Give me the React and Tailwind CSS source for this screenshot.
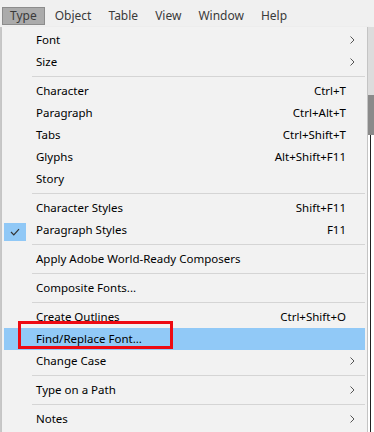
const items = [
  { label: "Font", sub: true },
  { label: "Size", sub: true },
  { sep: true },
  { label: "Character", key: "Ctrl+T" },
  { label: "Paragraph", key: "Ctrl+Alt+T" },
  { label: "Tabs", key: "Ctrl+Shift+T" },
  { label: "Glyphs", key: "Alt+Shift+F11" },
  { label: "Story" },
  { sep: true },
  { label: "Character Styles", key: "Shift+F11" },
  { label: "Paragraph Styles", key: "F11", checked: true },
  { sep: true },
  { label: "Apply Adobe World-Ready Composers" },
  { sep: true },
  { label: "Composite Fonts..." },
  { sep: true },
  { label: "Create Outlines", key: "Ctrl+Shift+O" },
  { label: "Find/Replace Font...", active: true },
  { label: "Change Case", sub: true },
  { sep: true },
  { label: "Type on a Path", sub: true },
  { sep: true },
  { label: "Notes", sub: true },
];

const menuBar = ["Type", "Object", "Table", "View", "Window", "Help"];

function Chevron() {
  return (
    <svg width="5" height="8" viewBox="0 0 5 8" className="absolute right-[10px] top-[7px]">
      <path d="M0.5 0.5 L4 4 L0.5 7.5" fill="none" stroke="#555" strokeWidth="1" />
    </svg>
  );
}

function Check() {
  return (
    <div className="absolute left-0 top-[4px] w-[22px] h-[18px] bg-[#90c8f6] flex items-center justify-center">
      <svg width="10" height="8" viewBox="0 0 10 8">
        <path d="M1 4 L3.8 6.8 L9 1.2" fill="none" stroke="#333" strokeWidth="1.2" />
      </svg>
    </div>
  );
}

function MenuItem({ item }) {
  if (item.sep) {
    return (
      <div className="h-[7px] flex items-center pl-[28px]">
        <div className="h-px w-full bg-[#d5d5d5]" />
      </div>
    );
  }
  return (
    <div
      className={`relative h-[22px] flex items-center pl-[32px] pr-[19px] ${
        item.active ? "bg-[#91c9f7]" : ""
      }`}
    >
      {item.checked && <Check />}
      {item.active && (
        <div className="absolute left-[14px] top-[-7px] w-[155px] h-[28px] border-[3px] border-[#ee0a12]" />
      )}
      <span className="flex-1">{item.label}</span>
      {item.key && <span>{item.key}</span>}
      {item.sub && <Chevron />}
    </div>
  );
}

export default function App() {
  return (
    <div
      className="w-[374px] h-[432px] overflow-hidden flex flex-col bg-[#f0f0f0] text-[11.5px] text-black"
      style={{ fontFamily: '"Segoe UI", "Noto Sans", "Open Sans", sans-serif' }}
    >
      {/* menu bar */}
      <div className="h-[27px] shrink-0 flex items-end pl-[2px] pb-[2px] text-[#3a3a3a] text-[12px]">
        {menuBar.map((m, i) => (
          <div
            key={m}
            className={`h-[18px] flex items-center px-[7px] mr-[3px] ${
              i === 0 ? "bg-[#ababab] border border-[#8c8c8c]" : ""
            }`}
          >
            {m}
          </div>
        ))}
      </div>

      <div className="flex flex-1">
        {/* left edge of the workspace */}
        <div className="w-[2px] bg-[#c8c8c8]" />

        {/* dropdown */}
        <div className="w-[366px] bg-[#f2f2f2] border-r border-[#c4c4c4] px-[2px] pt-[2px] shadow-[2px_2px_3px_rgba(0,0,0,0.25)]">
          {items.map((it, i) => (
            <MenuItem key={i} item={it} />
          ))}
        </div>

        {/* document area behind the menu */}
        <div className="flex-1 flex flex-col bg-white">
          <div className="h-[68px] bg-[#dcdcdc]" />
          <div className="h-[40px] bg-[#8a8a8a]" />
          <div className="flex-1 ml-[2px] border-l border-[#222]" />
        </div>
      </div>
    </div>
  );
}
